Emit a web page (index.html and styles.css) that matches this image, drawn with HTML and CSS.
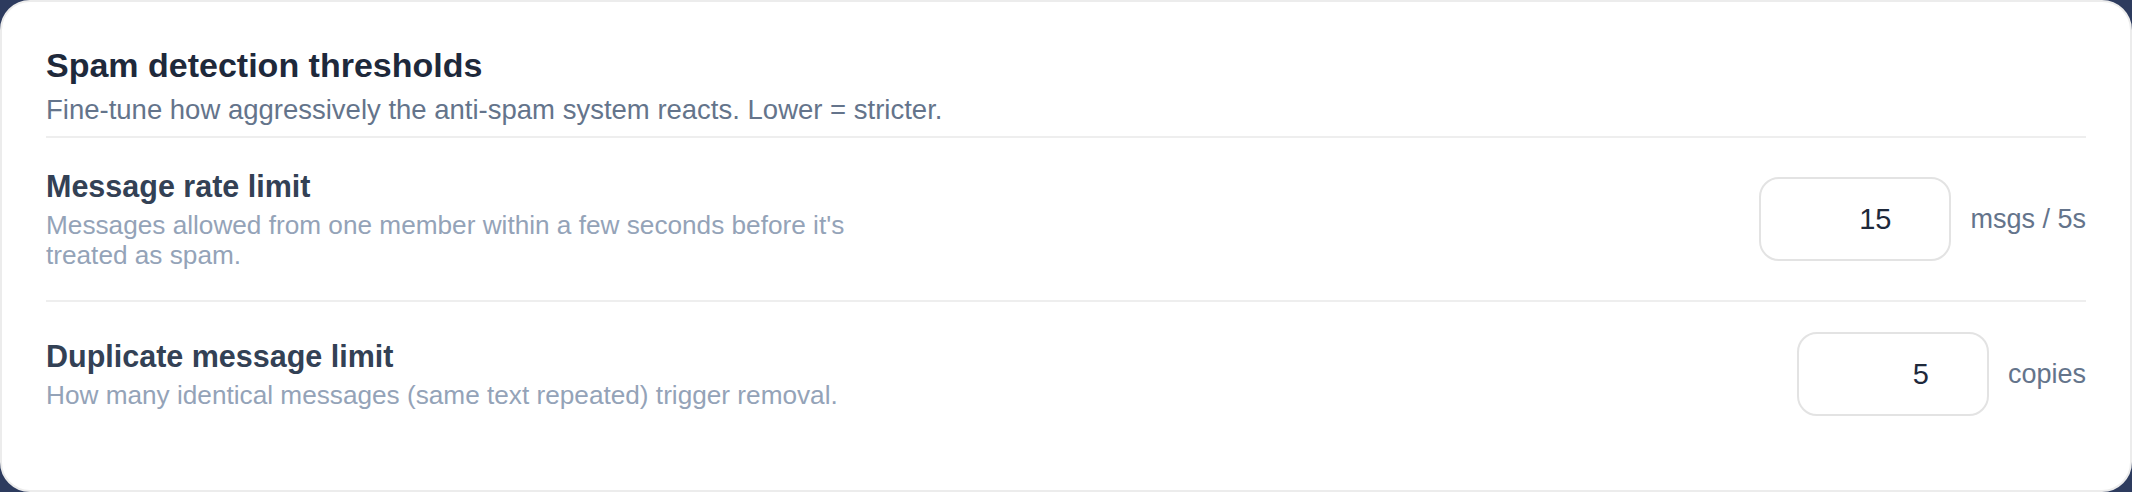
FILE: index.html
```html
<!DOCTYPE html>
<html lang="en">
<head>
    <meta charset="UTF-8">
    <meta name="viewport" content="width=device-width, initial-scale=1.0">
    <title>Spam detection thresholds</title>
    <link rel="stylesheet" href="styles.css">
</head>
<body>

<div class="card">
    <div class="card-header">
        <h2 class="card-title">Spam detection thresholds</h2>
        <p class="card-subtitle">Fine-tune how aggressively the anti-spam system reacts. Lower = stricter.</p>
    </div>

    <div class="setting">
        <div class="setting-text">
            <h3 class="setting-title">Message rate limit</h3>
            <p class="setting-desc">Messages allowed from one member within a few seconds before it's treated as spam.</p>
        </div>
        <div class="setting-control">
            <input type="text" class="num-input" value="15" inputmode="numeric">
            <span class="unit">msgs / 5s</span>
        </div>
    </div>

    <div class="setting">
        <div class="setting-text">
            <h3 class="setting-title">Duplicate message limit</h3>
            <p class="setting-desc">How many identical messages (same text repeated) trigger removal.</p>
        </div>
        <div class="setting-control">
            <input type="text" class="num-input" value="5" inputmode="numeric">
            <span class="unit">copies</span>
        </div>
    </div>
</div>

</body>
</html>
```

FILE: styles.css
```css
* {
    margin: 0;
    padding: 0;
    box-sizing: border-box;
}

body {
    background-color: #2d3b5e;
    font-family: 'Liberation Sans', Arial, Helvetica, sans-serif;
}

.card {
    background-color: #fff;
    border: 2px solid #ececec;
    border-radius: 30px;
    padding: 44px;
    min-height: 100vh;
}

.card-header {
    padding-bottom: 10px;
    border-bottom: 2px solid #eeeeee;
}

.card-title {
    font-size: 34px;
    line-height: 39px;
    font-weight: 700;
    color: #1e293b;
}

.card-subtitle {
    margin-top: 9px;
    font-size: 27.5px;
    line-height: 32px;
    color: #64748b;
}

.setting {
    display: flex;
    align-items: center;
    justify-content: space-between;
    gap: 40px;
    padding: 30px 0;
    border-bottom: 2px solid #eeeeee;
}

.setting:last-child {
    border-bottom: none;
}

.setting-title {
    font-size: 30.5px;
    line-height: 36px;
    font-weight: 700;
    color: #334155;
}

.setting-desc {
    margin-top: 6px;
    max-width: 860px;
    font-size: 26.2px;
    line-height: 30px;
    color: #94a3b8;
}

.setting-control {
    display: flex;
    align-items: center;
    gap: 19px;
}

.num-input {
    width: 192px;
    height: 84px;
    padding: 0 58px 0 20px;
    border: 2px solid #e3e3e3;
    border-radius: 20px;
    background-color: #fff;
    font-family: inherit;
    font-size: 29px;
    color: #1e293b;
    text-align: right;
    outline: none;
}

.unit {
    font-size: 27px;
    color: #64748b;
}
```
